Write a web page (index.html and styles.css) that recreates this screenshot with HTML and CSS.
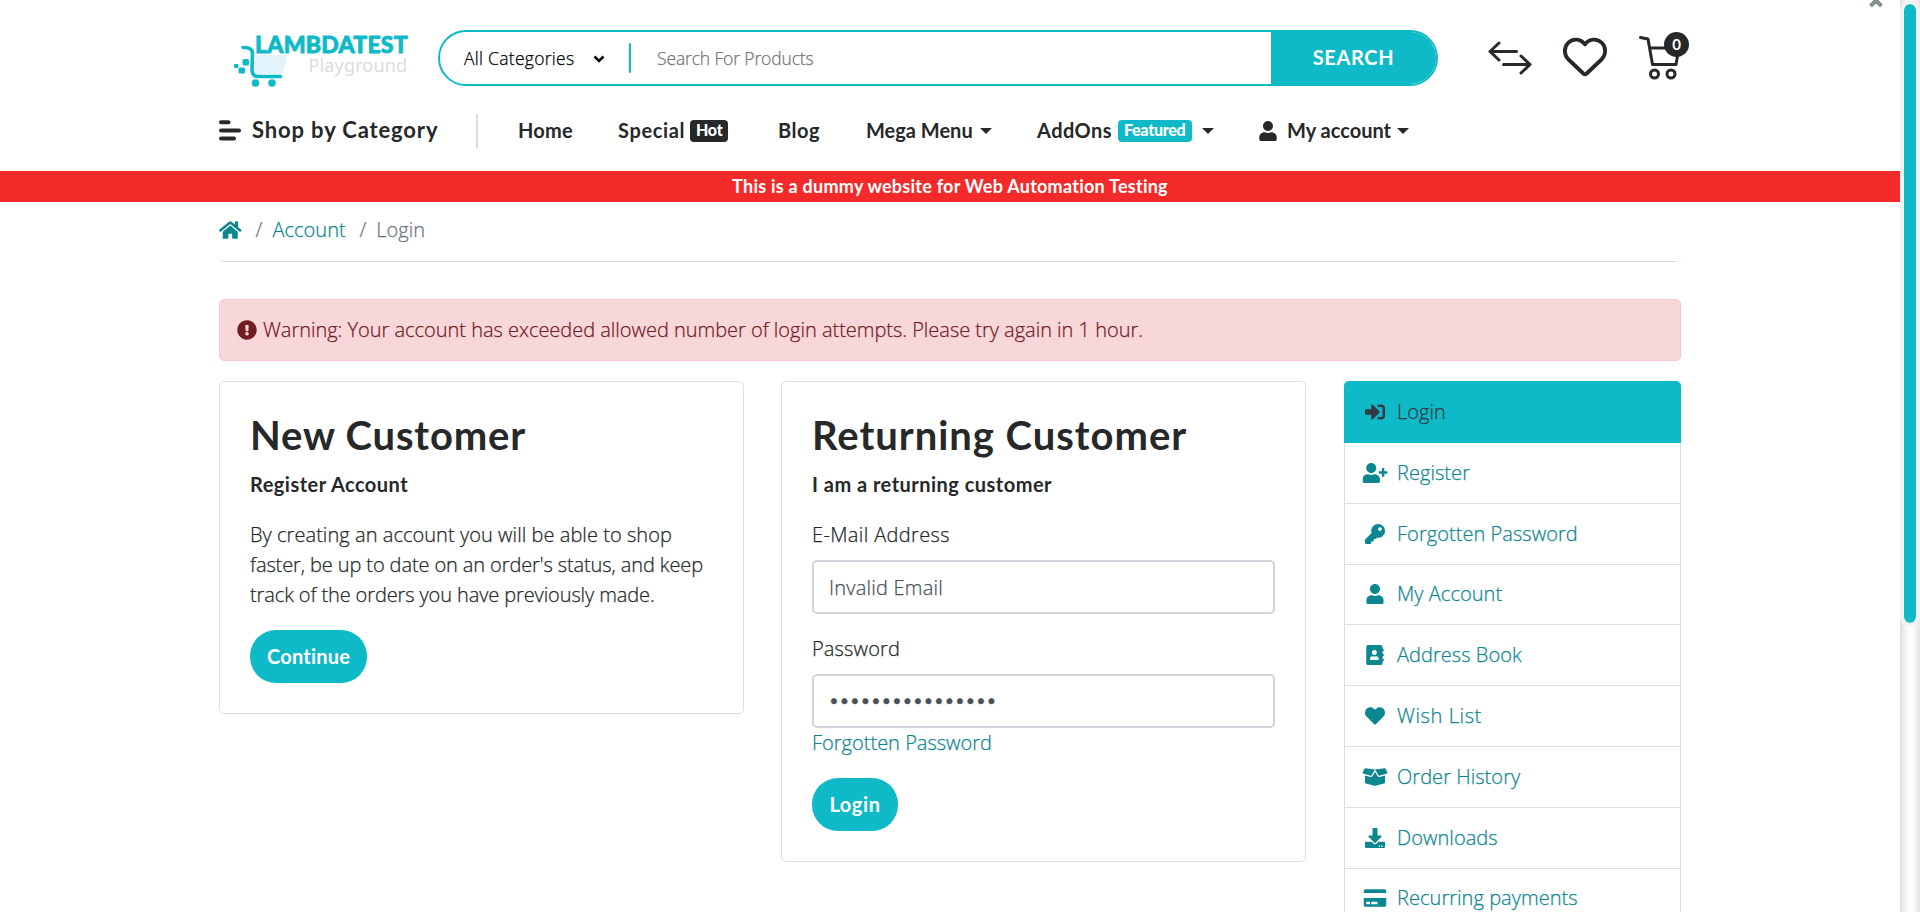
FILE: index.html
```html
<!DOCTYPE html>
<html lang="en">
<head>
<meta charset="utf-8">
<title>Account Login</title>
<link rel="stylesheet" href="styles.css">
</head>
<body>
<svg class="sprite" aria-hidden="true">
  <symbol id="user" viewBox="0 0 448 512"><path d="M224 256c70.7 0 128-57.3 128-128S294.7 0 224 0 96 57.3 96 128s57.3 128 128 128zm89.6 32h-16.7c-22.2 10.2-46.9 16-72.9 16s-50.6-5.8-72.9-16h-16.7C60.2 288 0 348.2 0 422.4V464c0 26.500 21.500 48 48 48h352c26.500 0 48-21.500 48-48v-41.600c0-74.200-60.200-134.400-134.400-134.400z"/></symbol>
</svg>
<div class="shell">
<div class="page">
  <header class="container">
    <div class="top">
      <svg class="logo" width="176" height="54" viewBox="0 0 176 54">
        <path d="M21 20h29q3 0 2.500 3l-3 13q-.700 3-4 3H23q-2 0-2-3z" fill="#e3f3fc"/>
        <path d="M9 12.500q9-.500 9.500 5.500l-.500 16.500q0 7 6 7h22.500" fill="none" stroke="#0fbac8" stroke-width="3.600" stroke-linecap="round"/>
        <rect x="8.500" y="24" width="6.500" height="6.500" rx="1.500" fill="#0fbac8"/><rect x="0" y="29" width="4.500" height="4" rx="1" fill="#0fbac8"/><rect x="4.500" y="32.500" width="6.500" height="6" rx="1.500" fill="#0fbac8"/>
        <circle cx="21.500" cy="48" r="3.800" fill="#0fbac8"/><circle cx="38" cy="48" r="3.800" fill="#0fbac8"/>
        <text x="21" y="18.300" class="logo-name">LAMBDATEST</text>
        <text x="74.500" y="37" class="logo-sub">Playground</text>
      </svg>
      <div class="search">
        <span class="cats">All Categories</span>
        <svg class="chev" width="12" height="8" viewBox="0 0 12 8"><path d="M1.500 1.500L6 6l4.500-4.500" fill="none" stroke="#000" stroke-width="2.500"/></svg>
        <i class="bar"></i>
        <span class="ph">Search For Products</span>
        <button class="go">SEARCH</button>
      </div>
      <div class="tools">
        <svg class="swap" width="44" height="36" viewBox="0 0 44 36" fill="none" stroke="#262829" stroke-width="3" stroke-linecap="round" stroke-linejoin="round"><path d="M28.500 11.500H2M11 3L2 11.500l9 8.500M15.500 24.500H42M33 16l9 8.500-9 8.500"/></svg>
        <svg class="wish" width="44" height="40" viewBox="0 0 44 40"><path d="M22 7.500C17.500 1.200 9.500 1.200 5 6S1 18 5.500 22.500L20.300 36.500q1.700 1.500 3.400 0L38.500 22.500C43 18 43.500 10.500 39 6S26.500 1.200 22 7.500z" fill="none" stroke="#262829" stroke-width="3.800" stroke-linejoin="round"/></svg>
        <div class="cart">
          <svg width="40" height="46" viewBox="0 0 40 46" fill="none" stroke="#262829" stroke-width="3" stroke-linecap="round" stroke-linejoin="round"><path d="M1.500 3.500l7.500 1.500 4.500 25.500h23.500l3-17M10.500 14h27"/><circle cx="15.500" cy="40" r="4"/><circle cx="32" cy="40" r="4"/></svg>
          <span class="count">0</span>
        </div>
      </div>
    </div>
    <nav class="nav">
      <svg class="burger" width="22" height="21" viewBox="0 0 22 21" stroke="#262829" stroke-width="4" stroke-linecap="round"><path d="M2 2.300h7.500M2 10.500h18M2 18.500h13"/></svg>
      <span class="shop">Shop by Category</span>
      <i class="rule"></i>
      <a class="home">Home</a>
      <a class="special">Special</a><b class="tag dark">Hot</b>
      <a class="blog">Blog</a>
      <a class="mega">Mega Menu</a><i class="caret"></i>
      <a class="addons">AddOns</a><b class="tag">Featured</b><i class="caret wide"></i>
      <svg class="person" width="18" height="20"><use href="#user"/></svg>
      <a class="acct">My account</a><i class="caret"></i>
    </nav>
  </header>
  <div class="notice"><span>This is a dummy website for Web Automation Testing</span></div>
  <main class="container">
    <div class="crumbs">
      <svg width="22.500" height="20" viewBox="0 0 576 512"><path d="M280.370 148.260L96 300.110V464a16 16 0 0 0 16 16l112.060-.290a16 16 0 0 0 15.920-16V368a16 16 0 0 1 16-16h64a16 16 0 0 1 16 16v95.640a16 16 0 0 0 16 16.050L464 480a16 16 0 0 0 16-16V300L295.670 148.260a12.190 12.190 0 0 0-15.300 0zM571.600 251.470L488 182.560V44.050a12 12 0 0 0-12-12h-56a12 12 0 0 0-12 12v72.610L318.470 43a48 48 0 0 0-61 0L4.340 251.470a12 12 0 0 0-1.600 16.900l25.500 31A12 12 0 0 0 45.150 301l235.220-193.740a12.190 12.190 0 0 1 15.300 0L530.900 301a12 12 0 0 0 16.900-1.600l25.500-31a12 12 0 0 0-1.700-16.930z"/></svg>
      <span class="slash">/</span><a class="c-acc">Account</a><span class="slash two">/</span><span class="c-login">Login</span>
    </div>
    <div class="alert">
      <svg width="20" height="20" viewBox="0 0 512 512"><path d="M504 256c0 136.997-111.043 248-248 248S8 392.997 8 256C8 119.083 119.043 8 256 8s248 111.083 248 248zm-248 50c-25.405 0-46 20.595-46 46s20.595 46 46 46 46-20.595 46-46-20.595-46-46-46zm-43.673-165.346l7.418 136c.347 6.364 5.609 11.346 11.982 11.346h48.546c6.373 0 11.635-4.982 11.982-11.346l7.418-136c.375-6.874-5.098-12.654-11.982-12.654h-63.383c-6.884 0-12.356 5.780-11.981 12.654z"/></svg>
      <span>Warning: Your account has exceeded allowed number of login attempts. Please try again in 1 hour.</span>
    </div>
    <div class="cols">
      <section class="card">
        <h2>New Customer</h2>
        <p class="sub">Register Account</p>
        <p class="copy">By creating an account you will be able to shop<br><span class="l2">faster, be up to date on an order's status, and keep</span><br><span class="l2">track of the orders you have previously made.</span></p>
        <button class="btn cont">Continue</button>
      </section>
      <section class="card">
        <h2 class="ret">Returning Customer</h2>
        <p class="sub">I am a returning customer</p>
        <label class="lab-mail">E-Mail Address</label>
        <input type="text" value="Invalid Email">
        <label class="lab-pass">Password</label>
        <input type="password" value="passwordpassword">
        <a class="forgot">Forgotten Password</a>
        <button class="btn login">Login</button>
      </section>
      <aside class="menu">
        <a class="item active"><svg viewBox="0 0 512 512"><path d="M416 448h-84c-6.600 0-12-5.400-12-12v-40c0-6.600 5.400-12 12-12h84c17.700 0 32-14.300 32-32V160c0-17.700-14.300-32-32-32h-84c-6.600 0-12-5.400-12-12V76c0-6.600 5.400-12 12-12h84c53 0 96 43 96 96v192c0 53-43 96-96 96zm-47-209L201 71c-15-15-41-4.500-41 17v96H24c-13.300 0-24 10.700-24 24v96c0 13.300 10.700 24 24 24h136v96c0 21.500 26 32 41 17l168-168c9.300-9.400 9.300-24.600 0-34z"/></svg><span>Login</span></a>
        <a class="item"><svg viewBox="0 0 640 512"><use href="#user" width="448" height="512"/><path d="M624 208h-64v-64c0-8.800-7.200-16-16-16h-32c-8.800 0-16 7.200-16 16v64h-64c-8.800 0-16 7.200-16 16v32c0 8.800 7.200 16 16 16h64v64c0 8.800 7.200 16 16 16h32c8.800 0 16-7.200 16-16v-64h64c8.800 0 16-7.200 16-16v-32c0-8.800-7.200-16-16-16z"/></svg><span>Register</span></a>
        <a class="item"><svg viewBox="0 0 512 512"><path d="M512 176.001C512 273.203 433.202 352 336 352c-11.220 0-22.190-1.062-32.827-3.069l-24.012 27.014A23.999 23.999 0 0 1 261.223 384H224v40c0 13.255-10.745 24-24 24h-40v40c0 13.255-10.745 24-24 24H24c-13.255 0-24-10.745-24-24v-78.059c0-6.365 2.529-12.470 7.029-16.971l161.802-161.802C163.108 213.814 160 195.271 160 176 160 78.798 238.797.001 335.999 0 433.488-.001 512 78.511 512 176.001zM336 128c0 26.510 21.490 48 48 48s48-21.490 48-48-21.490-48-48-48-48 21.490-48 48z"/></svg><span>Forgotten Password</span></a>
        <a class="item"><svg viewBox="0 0 448 512"><use href="#user" width="448" height="512"/></svg><span>My Account</span></a>
        <a class="item"><svg viewBox="0 0 448 512"><path d="M436 160c6.600 0 12-5.400 12-12v-40c0-6.600-5.400-12-12-12h-20V48c0-26.500-21.500-48-48-48H48C21.500 0 0 21.500 0 48v416c0 26.500 21.500 48 48 48h320c26.500 0 48-21.500 48-48v-48h20c6.600 0 12-5.400 12-12v-40c0-6.600-5.400-12-12-12h-20v-64h20c6.600 0 12-5.400 12-12v-40c0-6.600-5.400-12-12-12h-20v-64h20zm-228-32c35.300 0 64 28.700 64 64s-28.700 64-64 64-64-28.700-64-64 28.700-64 64-64zm112 236.800c0 10.600-10 19.200-22.400 19.200H118.400C106 384 96 375.400 96 364.800v-19.200c0-31.800 30.100-57.600 67.200-57.600h5c12.300 5.100 25.700 8 39.800 8s27.600-2.900 39.800-8h5c37.100 0 67.200 25.800 67.200 57.600v19.200z"/></svg><span>Address Book</span></a>
        <a class="item wl"><svg viewBox="0 0 512 512"><path d="M462.300 62.600C407.500 15.900 326 24.300 275.700 76.200L256 96.500l-19.700-20.300C186.100 24.300 104.500 15.900 49.700 62.600c-62.800 53.600-66.100 149.800-9.900 207.900l193.500 199.800c12.500 12.900 32.800 12.900 45.300 0l193.500-199.800c56.300-58.100 53-154.300-9.800-207.900z"/></svg><span>Wish List</span></a>
        <a class="item"><svg viewBox="0 0 640 512"><path d="M425.700 256c-16.900 0-32.800-9-41.400-23.400L320 126l-64.200 106.600c-8.700 14.500-24.600 23.500-41.500 23.500-4.500 0-9-.600-13.300-1.900L64 215v178c0 14.700 10 27.500 24.200 31l216.200 54.100c10.200 2.500 20.900 2.500 31 0L551.800 424c14.200-3.600 24.200-16.400 24.200-31V215l-137 39.100c-4.300 1.300-8.800 1.900-13.300 1.900zm212.600-112.200L586.800 41c-3.100-6.200-9.800-9.800-16.700-8.900L320 64l91.700 152.100c3.800 6.300 11.400 9.300 18.500 7.300l197.900-56.500c9.900-2.900 14.700-13.900 10.200-23.100zM53.200 41L1.700 143.800c-4.600 9.200.300 20.200 10.100 23l197.900 56.500c7.100 2 14.700-1 18.500-7.300L320 64 69.800 32.100c-6.900-.800-13.500 2.700-16.600 8.900z"/></svg><span>Order History</span></a>
        <a class="item"><svg viewBox="0 0 512 512"><path d="M216 0h80c13.300 0 24 10.700 24 24v168h87.700c17.800 0 26.700 21.500 14.100 34.100L269.700 378.300c-7.500 7.500-19.800 7.500-27.300 0L90.100 226.100c-12.600-12.600-3.700-34.100 14.100-34.100H192V24c0-13.300 10.700-24 24-24zm296 376v112c0 13.300-10.700 24-24 24H24c-13.300 0-24-10.700-24-24V376c0-13.300 10.700-24 24-24h146.700l49 49c20.100 20.100 52.500 20.100 72.600 0l49-49H488c13.300 0 24 10.700 24 24zm-124 88c0-11-9-20-20-20s-20 9-20 20 9 20 20 20 20-9 20-20zm64 0c0-11-9-20-20-20s-20 9-20 20 9 20 20 20 20-9 20-20z"/></svg><span>Downloads</span></a>
        <a class="item"><svg viewBox="0 0 576 512"><path d="M0 432c0 26.500 21.500 48 48 48h480c26.500 0 48-21.500 48-48V256H0v176zm192-68c0-6.600 5.400-12 12-12h136c6.600 0 12 5.400 12 12v40c0 6.600-5.400 12-12 12H204c-6.600 0-12-5.400-12-12v-40zm-128 0c0-6.600 5.400-12 12-12h72c6.600 0 12 5.400 12 12v40c0 6.600-5.400 12-12 12H76c-6.600 0-12-5.400-12-12v-40zM576 80v48H0V80c0-26.500 21.500-48 48-48h480c26.500 0 48 21.500 48 48z"/></svg><span>Recurring payments</span></a>
      </aside>
    </div>
  </main>
  <svg class="close" width="16" height="8" viewBox="0 0 16 8"><path d="M2.500 6L8 .500 13.500 6M8 .500L5 -2.500M8 .500l3-3" fill="none" stroke="#869092" stroke-width="4"/></svg>
</div>
<div class="track"><div class="thumb"></div></div>
</div>
</body>
</html>
```
FILE: styles.css
```css
* { box-sizing: border-box; }
body { margin: 0; height: 912px; overflow: hidden; background: #fff; color: #262829; font: 300 20px/30px "Open Sans", sans-serif; letter-spacing: 0.05px; }
h2, p { margin: 0; }
.sprite { display: none; }
.shell { display: flex; height: 912px; }
.page { width: 1900px; height: 912px; position: relative; overflow: hidden; }
.container { width: 1462px; margin: 0 auto; }

/* thicken the light face slightly */
.cats, .ph, .crumbs, .alert span, .copy, label, input, .forgot, .item span { -webkit-text-stroke: 0.25px currentColor; }

.top { display: flex; height: 86px; padding: 30px 0 0 15px; }
.logo { margin: 5px 28px 0 0; overflow: visible; }
.logo-name { font: 900 23px Lato, sans-serif; letter-spacing: 0.25px; fill: #0fbac8; stroke: #0fbac8; stroke-width: 0.8px; }
.logo-sub { font: 400 18px "Noto Sans", sans-serif; letter-spacing: 0.15px; fill: #dcdcdc; }
.search { display: flex; align-items: center; width: 1000px; height: 56px; border: 2px solid #0fbac8; border-radius: 28px; overflow: hidden; color: #000; font-size: 17.5px; }
.cats { width: 112px; margin-left: 24px; letter-spacing: 0.28px; white-space: nowrap; }
.chev { margin: 2px 24px 0 17px; }
.bar { width: 2px; height: 30px; border-radius: 1px; background: #0fbac8; }
.ph { flex: 1; margin-left: 26px; color: #757575; letter-spacing: -0.14px; }
.go { width: 167px; height: 56px; margin-right: -2px; padding: 0 2px 2px 0; border: 0; background: #0fbac8; color: #fff; font: 700 20px Lato, sans-serif; letter-spacing: 0.65px; }
.tools { display: flex; flex: none; padding-left: 50px; }
.swap { margin-top: 10px; }
.wish { margin: 7px 0 0 31px; overflow: visible; }
.cart { position: relative; margin: 4px 0 0 32px; }
.cart svg { overflow: visible; }
.count { position: absolute; left: 25px; top: -2px; width: 25px; height: 25px; border-radius: 50%; background: #262829; color: #fff; font: 700 15px/24px Lato, sans-serif; text-align: center; }

.nav { display: flex; align-items: center; height: 85px; padding-top: 4px; font: 700 20px/28px Lato, sans-serif; white-space: nowrap; }
.nav a, .nav .shop { padding-bottom: 2px; }
.burger { margin-right: 11px; }
.shop { width: 224px; font-size: 22px; letter-spacing: 0.86px; }
.rule { width: 2px; height: 34px; background: #dcdcdc; }
.home { width: 100px; margin-left: 40px; letter-spacing: 0.25px; }
.special { width: 72px; letter-spacing: 0.62px; }
.tag { width: 74px; height: 22px; padding: 0 6px; border-radius: 4px; background: #0fbac8; color: #fff; font-size: 16px; line-height: 20px; letter-spacing: -0.28px; }
.tag.dark { width: 38px; background: #262829; }
.blog { width: 88px; margin-left: 50px; letter-spacing: 0.51px; }
.mega { width: 114px; letter-spacing: 0; }
.caret { border: 6px solid transparent; border-top: 6px solid #262829; border-bottom: 0; }
.caret.wide { margin-left: 10px; }
.addons { width: 81px; margin-left: 45px; letter-spacing: 0.45px; }
.person { margin: 0 10px 0 45px; fill: #262829; }
.acct { width: 110px; letter-spacing: 0; }

.notice { height: 31px; background: #f42a2a; color: #fff; text-align: center; font: 700 18px/30px Lato, sans-serif; letter-spacing: 0.25px; }

.crumbs { display: flex; align-items: center; height: 60px; padding-bottom: 3px; border-bottom: 1px solid #dcdddf; border-radius: 0 0 5px 5px; color: #6c757d; }
.crumbs svg { fill: #0c8790; }
.slash { margin: 0 10px 0 14px; }
.slash.two { margin-left: 15px; }
.c-acc { color: #0c8790; width: 72px; }
.alert { display: flex; align-items: center; height: 62px; margin: 37px 0 20px; padding: 0 17px; border: 1px solid #f5c6cb; border-radius: 5px; background: #f8d7da; color: #721c24; }
.alert svg { margin-right: 6px; fill: #721c24; }
.alert span { letter-spacing: -0.02px; }

.cols { display: flex; align-items: flex-start; }
.card { display: flex; flex-direction: column; align-items: flex-start; width: 525px; margin-right: 37px; padding: 30px; border: 1px solid #dedede; border-radius: 5px; }
h2 { font: 700 40px/46px Lato, sans-serif; letter-spacing: 0.82px; margin-bottom: 11px; }
h2.ret { letter-spacing: 0.96px; }
.sub { font: 700 20px/30px Lato, sans-serif; letter-spacing: 0.48px; margin-bottom: 21px; }
.copy { white-space: nowrap; margin-bottom: 20px; }
.l2 { letter-spacing: -0.11px; }
.btn { height: 53px; padding: 0 17px 1px; border: 0; border-radius: 26px; background: #0fbac8; color: #fff; font: 700 20px Lato, sans-serif; letter-spacing: 0.2px; }
.btn.login { padding: 0 17px 1px; width: 86px; letter-spacing: 0.6px; }
label { margin-bottom: 10px; }
.lab-mail { letter-spacing: 0.37px; }
.lab-pass { letter-spacing: 0.15px; }
input { width: 463px; height: 54px; margin-bottom: 20px; padding: 0 15px; border: 2px solid #ced4da; border-radius: 5px; color: #495057; font: 300 20px "Open Sans", sans-serif; letter-spacing: 0.22px; }
input[type=password] { margin-bottom: 0; font: 400 20px "DejaVu Sans", sans-serif; letter-spacing: -1.3px; padding-left: 14px; }
.forgot { margin-bottom: 20px; color: #0c8790; letter-spacing: 0.01px; }
.menu { width: 337px; margin-left: 1px; border: 1px solid #dedede; border-radius: 5px 5px 0 0; }
.item { display: flex; align-items: center; height: 60.8px; padding-left: 16px; border-bottom: 1px solid #dedede; color: #0c8790; fill: #0c8790; }
.item svg { width: 28px; height: 20px; margin-right: 8px; }
.item.wl span { letter-spacing: 0.6px; }
.item.active { height: 62px; margin: -1px -1px 0; padding: 0 0 1px 17px; border: 0; border-radius: 5px 5px 0 0; background: #0fbac8; color: #343a40; fill: #343a40; }
.close { position: absolute; left: 1868px; top: 0; }

.track { width: 20px; background: linear-gradient(90deg, #dedede, #fafafa 35%, #fff 60%, #e4e4e4); }
.thumb { height: 627px; border: 4px solid #f4f4f4; border-radius: 10px; background: #0fbac8; background-clip: padding-box; box-shadow: inset 0 0 0 0 #f4f4f4; }
```
